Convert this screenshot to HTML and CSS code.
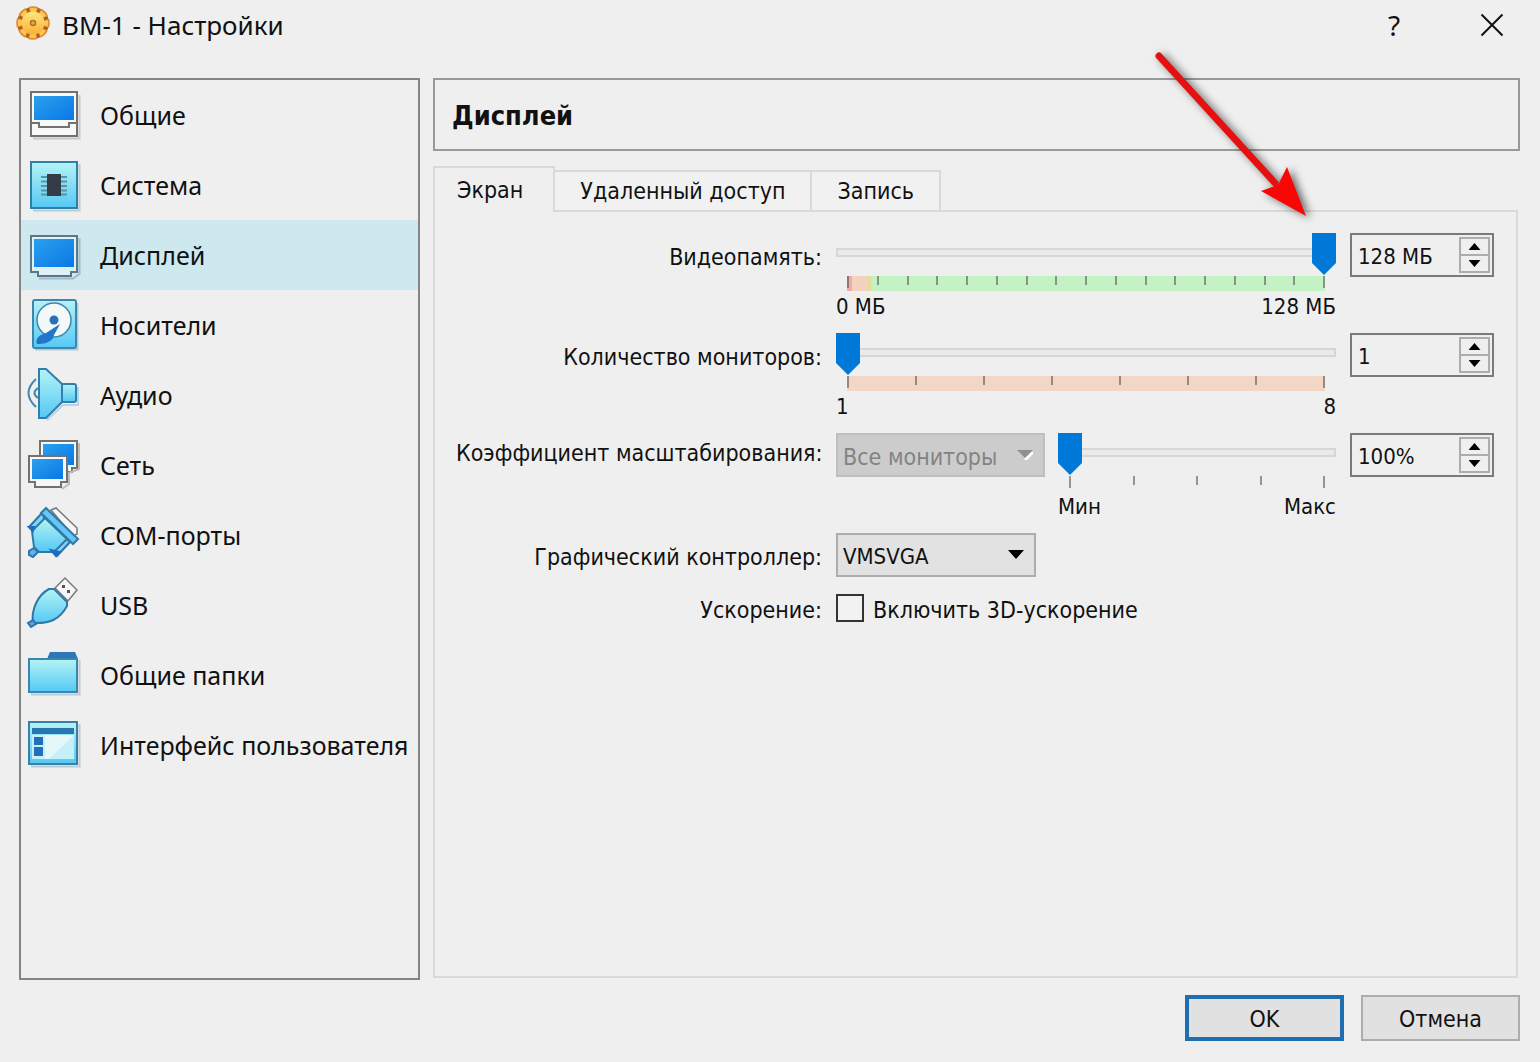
FILE: index.html
```html
<!DOCTYPE html>
<html lang="ru">
<head>
<meta charset="utf-8">
<title>ВМ-1 - Настройки</title>
<link rel="stylesheet" href="styles.css">
</head>
<body>
<svg class="defs" width="0" height="0" aria-hidden="true">
  <defs>
    <linearGradient id="screen" x1="0" y1="0" x2="1" y2="1"><stop offset="0" stop-color="#2ba0ee"/><stop offset="1" stop-color="#0878e6"/></linearGradient>
    <linearGradient id="aqua" x1="0" y1="0" x2="0" y2="1"><stop offset="0" stop-color="#b4f4f4"/><stop offset="1" stop-color="#55c8f4"/></linearGradient>
    <linearGradient id="gold" x1="0" y1="0" x2="0" y2="1"><stop offset="0" stop-color="#ffe680"/><stop offset="1" stop-color="#fbb035"/></linearGradient>
  </defs>
</svg>
<header class="titlebar">
  <svg class="app-icon" viewBox="0 0 36 36" aria-hidden="true">
    <circle cx="18" cy="18" r="16" fill="#ae6226"/>
    <circle cx="18" cy="18" r="14.500" fill="none" stroke="#e68a2e" stroke-width="4.500" stroke-dasharray="8.400 2.990" stroke-dashoffset="4.200"/>
    <circle cx="18" cy="18" r="13" fill="none" stroke="#fcc850" stroke-width="4" stroke-dasharray="6.200 4.010" stroke-dashoffset="3.100"/>
    <circle cx="18" cy="18" r="11.500" fill="url(#gold)"/>
    <circle cx="18" cy="18" r="2.500" fill="#e9a83a" stroke="#a8742c" stroke-width="1.500"/>
  </svg>
  <h1 class="title">ВМ-1 - Настройки</h1>
  <button class="caption-btn" type="button" aria-label="Справка">?</button>
  <button class="caption-btn" type="button" aria-label="Закрыть"><svg width="24" height="24" viewBox="0 0 24 24"><path d="M1.500 1.500 22.500 22.500M22.500 1.500 1.500 22.500" stroke="#111" stroke-width="2" fill="none"/></svg></button>
</header>
<main class="content">
  <nav class="sidebar">
    <a class="item" href="#general">
      <svg class="icon" viewBox="0 0 56 70"><path d="M8 58.500H54.500V15" fill="none" stroke="#c9c9c9" stroke-width="2"/><rect x="6" y="12" width="46" height="44" fill="#f7f9f9" stroke="#74716e" stroke-width="2"/><rect x="9" y="16" width="40" height="24" fill="url(#screen)"/><path d="M6 43H14V47H44V43H52" fill="none" stroke="#74716e" stroke-width="2"/></svg>
      Общие</a>
    <a class="item" href="#system">
      <svg class="icon" viewBox="0 0 56 70"><path d="M8 60.500H54.500V14" fill="none" stroke="#b9cdd6" stroke-width="2"/><rect x="6" y="12" width="46" height="46" fill="url(#aqua)" stroke="#2f7fa6" stroke-width="2"/><path d="M16 27H42M16 31.500H42M16 36H42M16 40.500H42M16 44.500H42" stroke="#5b93a5" stroke-width="2"/><rect x="22" y="24" width="14" height="22" fill="#343c4a"/></svg>
      Система</a>
    <a class="item active" href="#display" aria-current="page">
      <svg class="icon" viewBox="0 0 56 70"><path d="M14 58.500H48L54.500 54V18" fill="none" stroke="#a4b9c4" stroke-width="2"/><path d="M6 16H52V52H46V56H13V52H6Z" fill="#dff1f5" stroke="#56798c" stroke-width="2"/><rect x="9" y="19" width="40" height="28" fill="url(#screen)"/></svg>
      Дисплей</a>
    <a class="item" href="#storage">
      <svg class="icon" viewBox="0 0 56 70"><path d="M10 59.500H52.500V13" fill="none" stroke="#b9c9d2" stroke-width="2"/><rect x="8" y="10" width="43" height="48" rx="2" fill="url(#aqua)" stroke="#3c86b0" stroke-width="2"/><circle cx="29" cy="30" r="17" fill="#f3f8f8" stroke="#3c86b0" stroke-width="1.500"/><circle cx="29" cy="30" r="4.500" fill="#2a71b8"/><path d="M35 34 21 43C13 45 10 50 12 54C18 54 25 53 28 48L29 45Z" fill="#2176cc"/></svg>
      Носители</a>
    <a class="item" href="#audio">
      <svg class="icon" viewBox="0 0 56 70"><path d="M22 60 38 45H53V27" fill="none" stroke="#b8d3e3" stroke-width="2"/><rect x="36" y="24" width="15" height="18" rx="2" fill="url(#aqua)" stroke="#337eac" stroke-width="2"/><path d="M14 9H21L37 24V42L21 58H14Z" fill="url(#aqua)" stroke="#337eac" stroke-width="2"/><path d="M11 19Q-4 33 11 47M13 28Q6 33 13 38" fill="none" stroke="#4385ad" stroke-width="2"/></svg>
      Аудио</a>
    <a class="item" href="#network">
      <svg class="icon" viewBox="0 0 56 70"><path d="M15 11H52V38H47V42H20V38H15Z" fill="#f5f8f8" stroke="#74716e" stroke-width="2"/><rect x="18" y="14" width="31" height="21" fill="url(#screen)"/><path d="M37 59 44 54V43L54 39V13" fill="none" stroke="#bbb" stroke-width="2"/><path d="M4 26H42V52H36V57H10V52H4Z" fill="#f5f8f8" stroke="#74716e" stroke-width="2"/><rect x="7" y="29" width="31" height="20" fill="url(#screen)"/></svg>
      Сеть</a>
    <a class="item" href="#serial">
      <svg class="icon" viewBox="0 0 56 70"><path d="M26 10 31 8 52 28V34L48 36Z" fill="#f6f6f6" stroke="#77797a" stroke-width="1.500"/><path d="M17 13 4 27 8 31 20 20ZM40 38 27 51 32 56 45 42Z" fill="#7bd7f5" stroke="#2f73ab" stroke-width="2"/><path d="M20 18 7 31 9 47 14 52 29 52 42 39Z" fill="url(#aqua)" stroke="#3178a8" stroke-width="2"/><path d="M21 8 53 39 48 44 16 13Z" fill="#65c7f5" stroke="#3178a8" stroke-width="2"/><path d="M4 51 9 48 13 52 8 57 4 55Z" fill="#62b3e8" stroke="#2f73ab" stroke-width="2"/><path d="M4 27 8 31 9 27ZM26 50 31 56 35 52Z" fill="#1b6dc7" stroke="#1b6dc7" stroke-width="2"/></svg>
      COM-порты</a>
    <a class="item" href="#usb">
      <svg class="icon" viewBox="0 0 56 70"><path d="M30 18 40 8 52 20 43 31Z" fill="#f6f6f6" stroke="#77797a" stroke-width="1.500"/><path d="M37 15h3v3h-3zM42 20h3v3h-3z" fill="#555"/><path d="M24 19H29L42 32V36C35 49 25 54 8 53C6 39 13 25 24 19Z" fill="url(#aqua)" stroke="#3178a8" stroke-width="2"/><path d="M8 50 11 54 6 57 3 53Z" fill="#4ea5df" stroke="#2f73ab" stroke-width="2"/></svg>
      USB</a>
    <a class="item" href="#folders">
      <svg class="icon" viewBox="0 0 56 70"><path d="M22 19 25 12H50L53 19V50H22Z" fill="#2b77b8"/><path d="M6 54.500H54.500V20" fill="none" stroke="#b9cdd6" stroke-width="2"/><rect x="4" y="19" width="48" height="33" fill="url(#aqua)" stroke="#3a86ad" stroke-width="2"/></svg>
      Общие папки</a>
    <a class="item" href="#interface">
      <svg class="icon" viewBox="0 0 56 70"><path d="M6 56.500H54.500V14" fill="none" stroke="#b9cdd6" stroke-width="2"/><rect x="4" y="12" width="48" height="42" fill="url(#aqua)" stroke="#3a7fa6" stroke-width="2"/><rect x="7" y="18" width="42" height="6" fill="#2b74ad"/><rect x="7" y="25" width="42" height="24" fill="#c5f0f7"/><path d="M20 25H49L24 49H20Z" fill="#e4f8fa"/><path d="M9 27h9v8h-9zM9 37h9v9h-9z" fill="#2270b8"/></svg>
      Интерфейс пользователя</a>
  </nav>
  <section class="page">
    <h2 class="page-title">Дисплей</h2>
    <div class="tabs" role="tablist">
      <button class="tab selected" type="button" role="tab" aria-selected="true">Экран</button>
      <button class="tab" type="button" role="tab" aria-selected="false">Удаленный доступ</button>
      <button class="tab" type="button" role="tab" aria-selected="false">Запись</button>
    </div>
    <form class="panel">
      <label class="name" for="vram">Видеопамять:</label>
      <div class="scale">
        <input class="slider" id="vram" type="range" min="0" max="128" value="128">
        <div class="ticks memory"><i></i><i></i><i></i><i></i><i></i><i></i><i></i><i></i><i></i><i></i><i></i><i></i><i></i><i></i><i></i><i></i><i></i></div>
        <div class="limits"><span>0 МБ</span><span>128 МБ</span></div>
      </div>
      <div class="spin">
        <input class="spin-value" type="text" value="128 МБ" aria-label="Видеопамять, значение">
        <div class="spin-buttons"><button type="button" class="step up" aria-label="Больше"></button><button type="button" class="step down" aria-label="Меньше"></button></div>
      </div>

      <label class="name" for="monitors">Количество мониторов:</label>
      <div class="scale">
        <input class="slider" id="monitors" type="range" min="1" max="8" value="1">
        <div class="ticks count"><i></i><i></i><i></i><i></i><i></i><i></i><i></i><i></i></div>
        <div class="limits"><span>1</span><span>8</span></div>
      </div>
      <div class="spin">
        <input class="spin-value" type="text" value="1" aria-label="Количество мониторов, значение">
        <div class="spin-buttons"><button type="button" class="step up" aria-label="Больше"></button><button type="button" class="step down" aria-label="Меньше"></button></div>
      </div>

      <label class="name raised" for="factor">Коэффициент масштабирования:</label>
      <div class="factor">
        <div class="combo wide">
          <select aria-label="Монитор" disabled><option>Все мониторы</option></select>
          <svg class="chevron" viewBox="0 0 16 10"><path d="M8 10 16 2" stroke="#fff" stroke-width="3" fill="none"/><path d="M0 0H16L8 8Z" fill="#909090"/></svg>
        </div>
        <div class="scale">
          <input class="slider" id="factor" type="range" min="100" max="200" value="100">
          <div class="ticks"><i></i><i></i><i></i><i></i><i></i></div>
          <div class="limits"><span>Мин</span><span>Макс</span></div>
        </div>
      </div>
      <div class="spin">
        <input class="spin-value" type="text" value="100%" aria-label="Коэффициент масштабирования, значение">
        <div class="spin-buttons"><button type="button" class="step up" aria-label="Больше"></button><button type="button" class="step down" aria-label="Меньше"></button></div>
      </div>

      <label class="name" for="controller">Графический контроллер:</label>
      <div class="combo">
        <select class="plain" id="controller"><option>VMSVGA</option></select>
        <svg class="chevron" viewBox="0 0 16 10"><path d="M0 0H16L8 9Z" fill="#000"/></svg>
      </div>

      <span class="name" id="accel">Ускорение:</span>
      <label class="check"><input type="checkbox" aria-describedby="accel">Включить 3D-ускорение</label>
    </form>
    <svg class="pointer" viewBox="0 0 180 190" aria-hidden="true">
      <g class="pointer-shape"><path d="M19 16 135 143" stroke="#e5100f" stroke-width="7" stroke-linecap="round"/><path d="M166 176 121 151 138 145 147 127Z" fill="#fa0505"/></g>
    </svg>
  </section>
</main>
<footer class="footer">
  <button class="push default" type="button">OK</button>
  <button class="push" type="button">Отмена</button>
</footer>
</body>
</html>
```
FILE: styles.css
```css
* {
  box-sizing: border-box;
}

body {
  display: flex;
  flex-direction: column;
  min-height: 100vh;
  margin: 0;
  padding: 0 20px 21px 19px;
  background: #efefef;
  color: #111;
  font: 23px/32px "DejaVu Sans Condensed", "Noto Sans", sans-serif;
}

button,
input,
select {
  margin: 0;
  color: inherit;
  font: inherit;
}

.defs {
  position: absolute;
}

.titlebar {
  display: flex;
  align-items: flex-start;
  height: 78px;
  padding-top: 5px;
}

.app-icon {
  width: 36px;
  height: 36px;
  margin-left: -4px;
}

.title {
  flex: 1;
  margin: 3px 0 0 11px;
  font: 26px/34px "Noto Sans", sans-serif;
}

.caption-btn {
  display: flex;
  align-items: center;
  justify-content: center;
  width: 56px;
  height: 40px;
  margin-left: 42px;
  padding: 0;
  border: 0;
  background: none;
  font: 28px/36px "Noto Sans", sans-serif;
}

.content {
  display: grid;
  flex: 1;
  grid-template-columns: 401px 1fr;
  gap: 13px;
}

.sidebar {
  border: 2px solid #858585;
}

.item {
  display: flex;
  align-items: center;
  gap: 19px;
  height: 70px;
  padding-left: 4px;
  color: inherit;
  font: 25px/34px "Noto Sans", sans-serif;
  text-decoration: none;
  white-space: nowrap;
}

.item.active {
  background: #cde8ef;
}

.icon {
  flex: none;
  width: 56px;
  height: 70px;
}

.page {
  position: relative;
  display: flex;
  flex-direction: column;
  padding-bottom: 2px;
}

.page-title {
  height: 73px;
  margin: 0 0 15px;
  padding: 0 17px;
  border: 2px solid #999;
  font-size: 27px;
  line-height: 72px;
}

.tabs {
  display: flex;
  align-items: flex-end;
  height: 44px;
}

.tab {
  height: 40px;
  padding: 0 25px;
  border: 2px solid #d9d9d9;
  border-width: 2px 2px 0 0;
  background: #f1f1f1;
}

.tab.selected {
  z-index: 1;
  height: 46px;
  margin-bottom: -2px;
  padding: 0 30px 0 22px;
  border-left-width: 2px;
  background: #efefef;
}

.panel {
  display: grid;
  flex: 1;
  grid-template-columns: 366px 1fr 144px;
  grid-template-rows: 100px 100px 100px 61px auto;
  column-gap: 14px;
  margin-right: 2px;
  padding: 21px 22px 21px 21px;
  border: 2px solid #d9d9d9;
}

.name {
  line-height: 48px;
  text-align: right;
  white-space: nowrap;
}

.name.raised {
  line-height: 40px;
}

.slider {
  display: block;
  width: 100%;
  height: 42px;
  background: none;
  appearance: none;
}

.slider::-webkit-slider-runnable-track {
  height: 42px;
  background:
    linear-gradient(#e9eaeb, #e9eaeb) center 17px / calc(100% - 4px) 5px no-repeat,
    linear-gradient(#d5d6d7, #d5d6d7) center 15px / 100% 9px no-repeat;
}

.slider::-webkit-slider-thumb {
  width: 24px;
  height: 42px;
  background: #0078d7;
  clip-path: polygon(0 0, 100% 0, 100% 30px, 50% 100%, 0 30px);
  appearance: none;
}

.ticks {
  display: flex;
  justify-content: space-between;
  height: 15px;
  margin: 1px 11px 0;
}

.ticks i {
  width: 2px;
  height: 9px;
  background: rgba(60, 60, 60, .5);
}

.ticks i:first-child,
.ticks i:last-child {
  height: 12px;
}

.memory {
  background: linear-gradient(90deg, #f2a9a9 5px, #f3d3bf 5px 21px, #e6dc9c 21px 24px, #c4f2c4 24px);
}

.count {
  background: #f2d6c6;
}

.limits {
  display: flex;
  justify-content: space-between;
  font-size: 22px;
}

.spin {
  display: flex;
  height: 44px;
  padding: 2px;
  border: 2px solid #7a7a7a;
  font-size: 22px;
}

.spin-value {
  flex: 1;
  min-width: 0;
  padding: 4px 0 0 4px;
  border: 0;
  background: none;
}

.spin-buttons {
  display: flex;
  flex-direction: column;
  width: 31px;
  border: 2px solid #adadad;
}

.step {
  display: flex;
  flex: 1;
  align-items: center;
  justify-content: center;
  padding: 0;
  border: 0;
  background: none;
}

.step.down {
  border-top: 2px solid #adadad;
}

.step::before {
  width: 12px;
  height: 7px;
  background: #000;
  content: "";
}

.step.up::before {
  clip-path: polygon(50% 0, 100% 100%, 0 100%);
}

.step.down::before {
  clip-path: polygon(0 0, 100% 0, 50% 100%);
}

.factor {
  display: grid;
  grid-template-columns: 209px 1fr;
  gap: 13px;
}

.combo {
  position: relative;
  grid-column: 2 / 4;
  width: 200px;
  height: 44px;
}

.combo.wide {
  grid-column: auto;
  width: 209px;
}

.combo select {
  width: 100%;
  height: 100%;
  padding: 4px 5px 0;
  border: 2px solid #adadad;
  border-radius: 0;
  background: #e2e2e2;
  opacity: 1;
  appearance: none;
}

.combo select.plain {
  font-size: 22px;
}

.combo select:disabled {
  border-color: #bfbfbf;
  background: #ccc;
  color: #838383;
}

.chevron {
  position: absolute;
  top: 17px;
  right: 12px;
  width: 16px;
  height: 10px;
  pointer-events: none;
}

.check {
  display: flex;
  grid-column: 2 / 4;
  gap: 9px;
  height: 30px;
  line-height: 32px;
}

.check input {
  width: 28px;
  height: 28px;
  border: 2px solid #333;
  background: #f2f2f2;
  appearance: none;
}

#accel {
  line-height: 32px;
}

.pointer {
  position: absolute;
  top: -38px;
  right: 200px;
  width: 180px;
  height: 190px;
  pointer-events: none;
}

.pointer-shape {
  filter: drop-shadow(4px 2px 4px rgba(0, 0, 0, .6));
}

.footer {
  display: flex;
  justify-content: flex-end;
  gap: 17px;
  padding-top: 15px;
}

.push {
  width: 159px;
  height: 46px;
  padding: 2px 0 0;
  border: 2px solid #adadad;
  background: #e1e1e1;
}

.push.default {
  border: 4px solid #1f6fb0;
}
```
